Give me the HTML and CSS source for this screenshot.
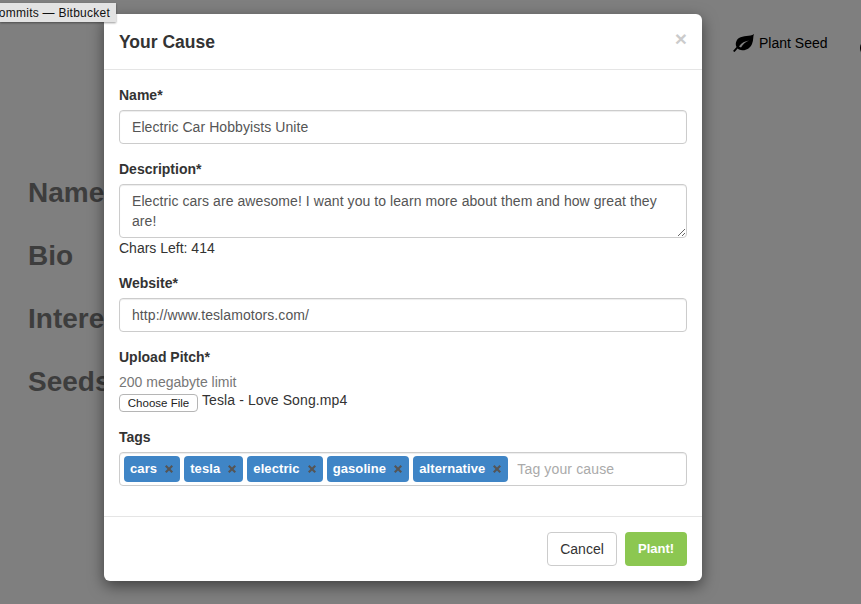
FILE: index.html
```html
<!DOCTYPE html>
<html lang="en">

<head>
    <meta charset="UTF-8">
    <meta name="viewport" content="width=device-width, initial-scale=1.0">
    <title>Your Cause</title>
    <link rel="stylesheet" href="styles.css">
</head>

<body>
    <div class="page">
        <nav class="nav">
            <a class="nav-link">
                <svg class="leaf" viewBox="0 0 21 18"><path d="M21 0C19.800 2.500 20.800 6 19 10C16.800 15 12 17 8 16C6.400 15.700 5.400 15.200 4.600 14.500L1.600 18L0 16.900L3.500 13C2 10 3 6 6 4C10 1.300 17 3 21 0Z"/><path class="vein" d="M6 12.500C8.500 8.800 12 7 16 6.500C12.500 8 10 10 8 13.500C7.300 13.300 6.600 13 6 12.500Z"/></svg>
                Plant Seed
            </a>
            <a class="nav-link">
                <svg class="nav-round" viewBox="0 0 18 18"><circle cx="9" cy="9" r="9"/></svg>
            </a>
        </nav>
        <section class="profile">
            <h2>Name</h2>
            <h2>Bio</h2>
            <h2>Interests</h2>
            <h2>Seeds</h2>
        </section>
    </div>

    <div class="tab-tip"><span>Commits — Bitbucket</span></div>

    <div class="modal">
        <div class="modal-header">
            <h4>Your Cause</h4>
            <span class="close">×</span>
        </div>
        <form class="modal-body">
            <div class="form-group">
                <label>Name*</label>
                <input type="text" class="form-control" value="Electric Car Hobbyists Unite">
            </div>
            <div class="form-group">
                <label>Description*</label>
                <textarea class="form-control area">Electric cars are awesome! I want you to learn more about them and how great they are!</textarea>
                <div class="hint">Chars Left: 414</div>
            </div>
            <div class="form-group">
                <label>Website*</label>
                <input type="text" class="form-control" value="http://www.teslamotors.com/">
            </div>
            <div class="form-group">
                <label>Upload Pitch*</label>
                <div class="muted">200 megabyte limit</div>
                <div class="file-row">
                    <button type="button" class="file-btn">Choose File</button>
                    <span class="file-name">Tesla - Love Song.mp4</span>
                </div>
            </div>
            <div class="form-group">
                <label>Tags</label>
                <div class="tags">
                    <span class="tag">cars<svg viewBox="0 0 8 8"><path d="M1.500 0L4 2.500L6.500 0L8 1.500L5.500 4L8 6.500L6.500 8L4 5.500L1.500 8L0 6.500L2.500 4L0 1.500Z"/></svg></span>
                    <span class="tag">tesla<svg viewBox="0 0 8 8"><path d="M1.500 0L4 2.500L6.500 0L8 1.500L5.500 4L8 6.500L6.500 8L4 5.500L1.500 8L0 6.500L2.500 4L0 1.500Z"/></svg></span>
                    <span class="tag">electric<svg viewBox="0 0 8 8"><path d="M1.500 0L4 2.500L6.500 0L8 1.500L5.500 4L8 6.500L6.500 8L4 5.500L1.500 8L0 6.500L2.500 4L0 1.500Z"/></svg></span>
                    <span class="tag">gasoline<svg viewBox="0 0 8 8"><path d="M1.500 0L4 2.500L6.500 0L8 1.500L5.500 4L8 6.500L6.500 8L4 5.500L1.500 8L0 6.500L2.500 4L0 1.500Z"/></svg></span>
                    <span class="tag">alternative<svg viewBox="0 0 8 8"><path d="M1.500 0L4 2.500L6.500 0L8 1.500L5.500 4L8 6.500L6.500 8L4 5.500L1.500 8L0 6.500L2.500 4L0 1.500Z"/></svg></span>
                    <input type="text" class="tag-input" placeholder="Tag your cause">
                </div>
            </div>
        </form>
        <div class="modal-footer">
            <button type="button" class="btn btn-cancel">Cancel</button>
            <button type="button" class="btn btn-plant">Plant!</button>
        </div>
    </div>
</body>

</html>
```

FILE: styles.css
```css
* {
    box-sizing: border-box;
}

html,
body {
    height: 100%;
}

body {
    margin: 0;
    overflow: hidden;
    position: relative;
    font-family: "Liberation Sans", Arial, sans-serif;
    font-size: 14px;
    line-height: 20px;
    color: #333;
    background-color: #7f7f7f;
}

.page {
    height: 100%;
    width: 900px;
}

.nav {
    display: flex;
    gap: 32px;
    padding: 33px 0 0 733px;
    height: 175px;
}

.nav-link {
    display: flex;
    align-items: center;
    gap: 5px;
    height: 20px;
    font-size: 14px;
    color: #000;
    white-space: nowrap;
}

.leaf {
    width: 21px;
    height: 18px;
    fill: #000;
}

.vein {
    fill: #7f7f7f;
}

.nav-round {
    width: 18px;
    height: 18px;
    margin-top: 10px;
    fill: #000;
}

.profile {
    width: 104px;
    overflow: hidden;
    padding-left: 28px;
}

.profile h2 {
    margin: 0 0 28px;
    font-size: 28px;
    line-height: 35px;
    font-weight: bold;
    color: #3d3d3d;
    white-space: nowrap;
}

.tab-tip {
    position: absolute;
    left: 0;
    top: 3px;
    width: 116px;
    height: 19px;
    display: flex;
    justify-content: flex-end;
    align-items: center;
    overflow: hidden;
    padding-right: 6px;
    font-size: 12px;
    letter-spacing: 0.25px;
    color: #111;
    white-space: nowrap;
    background-color: #e3e3e3;
    box-shadow: 0 1px 2px rgba(0, 0, 0, 0.4);
    z-index: 2;
}

.modal {
    position: absolute;
    left: 104px;
    top: 14px;
    width: 598px;
    background-color: #fff;
    border-radius: 6px;
    box-shadow: 0 5px 15px rgba(0, 0, 0, 0.5);
}

.modal-header {
    display: flex;
    justify-content: space-between;
    align-items: center;
    height: 56px;
    padding: 0 15px;
    border-bottom: 1px solid #e5e5e5;
}

.modal-header h4 {
    margin: 0;
    font-size: 17.5px;
    font-weight: bold;
}

.close {
    margin-top: -6px;
    font-size: 21px;
    font-weight: bold;
    color: #000;
    opacity: 0.2;
}

.modal-body {
    padding: 15px;
}

.form-group {
    margin-bottom: 15px;
}

label {
    display: block;
    margin-bottom: 5px;
    font-weight: bold;
}

.form-control {
    display: block;
    width: 100%;
    height: 34px;
    padding: 6px 12px;
    font-family: inherit;
    font-size: 14px;
    line-height: 20px;
    letter-spacing: 0.07px;
    color: #555;
    background-color: #fff;
    border: 1px solid #ccc;
    border-radius: 4px;
    box-shadow: inset 0 1px 1px rgba(0, 0, 0, 0.075);
}

.area {
    height: 54px;
}

.muted {
    color: #777;
}

.file-row {
    display: flex;
    align-items: flex-start;
    gap: 4px;
    height: 20px;
}

.file-btn {
    width: 79px;
    height: 18px;
    margin-top: 2px;
    padding: 0;
    font-family: inherit;
    font-size: 11.5px;
    color: #222;
    background-color: #fff;
    border: 1px solid #b5b5b5;
    border-radius: 4px;
}

.file-name {
    line-height: 16px;
    letter-spacing: 0.1px;
}

.tags {
    display: flex;
    align-items: center;
    gap: 4px;
    height: 34px;
    padding: 0 4px;
    border: 1px solid #ccc;
    border-radius: 4px;
    box-shadow: inset 0 1px 1px rgba(0, 0, 0, 0.075);
}

.tag {
    display: flex;
    align-items: center;
    gap: 8px;
    height: 26px;
    padding: 0 7px 0 6px;
    font-size: 13px;
    letter-spacing: 0.1px;
    font-weight: bold;
    color: #fff;
    background-color: #3f85c6;
    border-radius: 4px;
}

.tag svg {
    width: 8px;
    height: 8px;
    fill: #555;
}

.tag-input {
    flex: 1;
    min-width: 0;
    margin-left: 5px;
    padding: 0;
    font-family: inherit;
    font-size: 14px;
    letter-spacing: 0.14px;
    border: none;
    outline: none;
}

.tag-input::placeholder {
    color: #aaa;
}

.modal-footer {
    display: flex;
    justify-content: flex-end;
    gap: 8px;
    padding: 15px;
    border-top: 1px solid #e5e5e5;
}

.btn {
    height: 34px;
    padding: 6px 12px;
    font-family: inherit;
    font-size: 14px;
    line-height: 20px;
    border: 1px solid transparent;
    border-radius: 4px;
}

.btn-cancel {
    width: 70px;
    color: #333;
    background-color: #fff;
    border-color: #ccc;
}

.btn-plant {
    width: 62px;
    font-size: 13px;
    font-weight: bold;
    color: #fff;
    background-color: #8cc751;
}
```
